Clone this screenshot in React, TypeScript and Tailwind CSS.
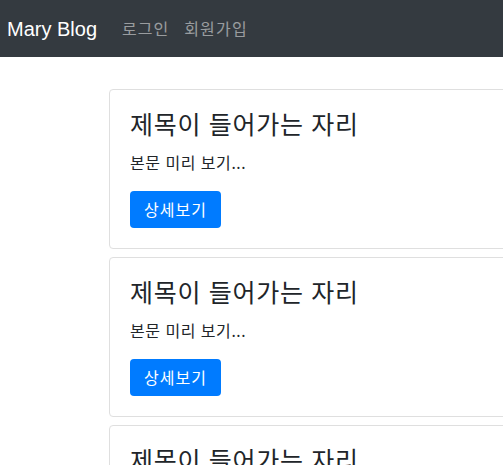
const FONT = "font-['Noto_Sans','Noto_Sans_CJK_KR',sans-serif]"

const posts = [1, 2, 3]

function PostCard() {
  return (
    <div className="w-[520px] shrink-0 rounded-[4px] border border-[#dfdfdf] bg-white px-5 pt-5 pb-5">
      <h4 className="mb-3 text-[25px] leading-[29px] tracking-[0.8px] text-[#212529]">제목이 들어가는 자리</h4>
      <p className="mb-4 text-[16px] leading-6 tracking-[0.6px] text-[#212529]">본문 미리 보기...</p>
      <button className="h-[37px] rounded-[4px] bg-[#007bff] px-[14px] text-[16px] tracking-[1px] text-white">
        상세보기
      </button>
    </div>
  )
}

export default function App() {
  return (
    <div className={`${FONT} h-[465px] w-full overflow-hidden bg-white`}>
      {/* 상단 네비게이션 */}
      <nav className="flex h-[57px] items-center bg-[#343a40] px-[7px]">
        <span className="mr-[25px] font-['Liberation_Sans',sans-serif] text-[20px] text-white">Mary Blog</span>
        <a className="mr-[15px] text-[16px] tracking-[1px] text-[#ffffff80]">로그인</a>
        <a className="text-[16px] tracking-[1.2px] text-[#ffffff80]">회원가입</a>
      </nav>

      {/* 글 목록 */}
      <div className="ml-[109px] mt-8 flex flex-col gap-2">
        {posts.map((p) => (
          <PostCard key={p} />
        ))}
      </div>
    </div>
  )
}
